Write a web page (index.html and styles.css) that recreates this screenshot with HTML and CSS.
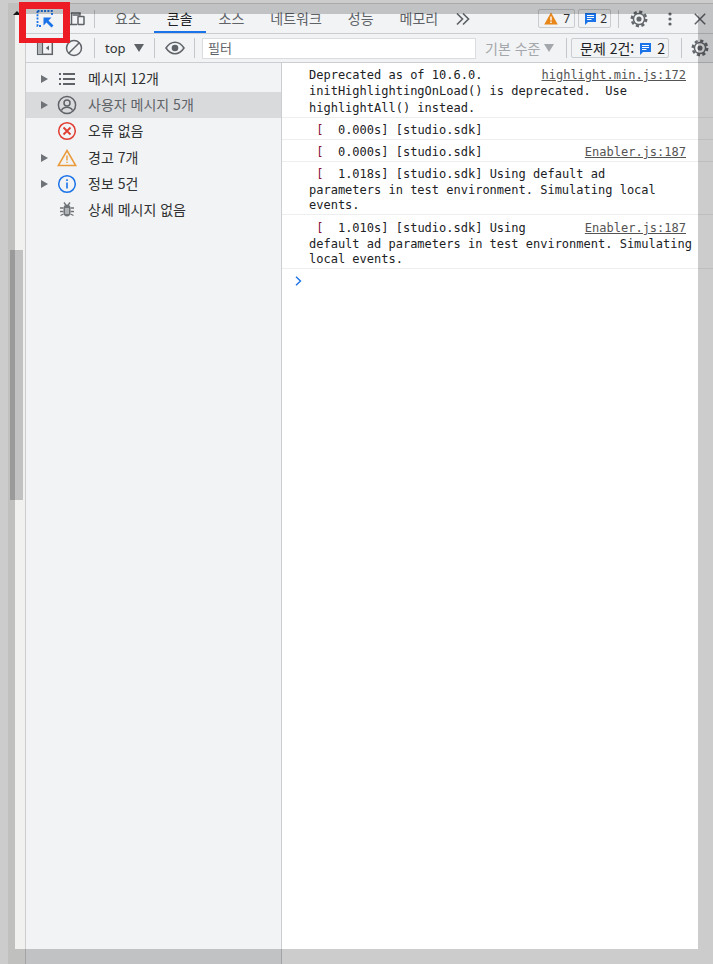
FILE: index.html
```html
<!DOCTYPE html>
<html lang="ko">
<head>
<meta charset="utf-8">
<title>DevTools Console</title>
<link rel="stylesheet" href="styles.css">
</head>
<body>
<svg class="defs" width="0" height="0"><defs><g id="gear-shape"><circle cx="10" cy="10" r="8" fill="none" stroke="#63676c" stroke-width="2.600" stroke-dasharray="3.500 2.780"/><circle cx="10" cy="10" r="7" fill="#63676c"/><circle cx="10" cy="10" r="5.300" fill="#f1f3f4"/><circle cx="10" cy="10" r="2.800" fill="#63676c"/></g></defs></svg>
<div class="page">
  <div class="scrollbar">
    <div class="scroll-arrow"></div>
    <div class="scroll-thumb"></div>
  </div>
  <div class="devtools">
    <div class="tabbar">
      <button class="icon-btn first">
        <svg width="18" height="18" viewBox="0 0 18 18"><path d="M1.500 1h14.500v4M1.500 1v15h4" fill="none" stroke="#1a73e8" stroke-width="1.800" stroke-dasharray="2 1.300"/><path d="M7.500 7.500h8l-3 3 5 5-2 2-5-5-3 3z" fill="#1a73e8"/></svg>
      </button>
      <button class="icon-btn second">
        <svg width="18" height="18" viewBox="0 0 18 18"><path d="M3 3h9v2H4.500" fill="none" stroke="#5f6368" stroke-width="1.500"/><path d="M3.500 3v11" stroke="#5f6368" stroke-width="1.500"/><rect x="10" y="6.500" width="6" height="8" rx=".6" fill="none" stroke="#5f6368" stroke-width="1.500"/><path d="M1.500 14.500H9" stroke="#5f6368" stroke-width="1.500"/></svg>
      </button>
      <span class="sep tab-sep"></span>
      <nav class="tabs">
        <span class="tab">요소</span>
        <span class="tab active">콘솔</span>
        <span class="tab">소스</span>
        <span class="tab">네트워크</span>
        <span class="tab">성능</span>
        <span class="tab">메모리</span>
      </nav>
      <svg class="more" width="16" height="14" viewBox="0 0 16 14"><path d="M2 1.500l5.500 5.500L2 12.500M8 1.500l5.500 5.500L8 12.500" fill="none" stroke="#5f6368" stroke-width="1.700"/></svg>
      <div class="tab-right">
        <span class="badge warn-badge">
          <svg width="14" height="13" viewBox="0 0 14 13"><path d="M7 .5l6.800 12H.2z" fill="#e8861a"/><path d="M6.300 4.500h1.400v4H6.300zM6.300 9.500h1.400v1.400H6.300z" fill="#fff"/></svg>7
        </span>
        <span class="badge info-badge">
          <svg width="13" height="13" viewBox="0 0 13 13"><path d="M1 1h11v9H4l-3 3z" fill="#1a73e8"/><path d="M3 3.500h7M3 5.500h7M3 7.500h4.500" stroke="#fff" stroke-width="1"/></svg>2
        </span>
        <span class="sep right-sep"></span>
        <svg class="gear top-gear" width="20" height="20" viewBox="-1 -1 22 22"><use href="#gear-shape"/></svg>
        <svg class="dots" width="4" height="14" viewBox="0 0 4 14"><circle cx="2" cy="2" r="1.600"/><circle cx="2" cy="7" r="1.600"/><circle cx="2" cy="12" r="1.600"/></svg>
        <svg class="close" width="12" height="12" viewBox="0 0 12 12"><path d="M.8.800l10.400 10.400M11.200.800L.8 11.200" stroke="#5f6368" stroke-width="1.500"/></svg>
      </div>
    </div>
    <div class="toolbar">
      <button class="icon-btn first">
        <svg width="18" height="18" viewBox="0 0 18 18"><rect x="1.700" y="2.700" width="14.600" height="12.600" fill="none" stroke="#5f6368" stroke-width="1.500"/><rect x="2" y="3" width="4.500" height="12" fill="#b5b8bb"/><path d="M6.500 3v12" stroke="#5f6368" stroke-width="1.200"/><path d="M13 6.500v5L9.800 9z" fill="#5f6368"/></svg>
      </button>
      <button class="icon-btn block">
        <svg width="18" height="18" viewBox="0 0 18 18"><circle cx="9" cy="9" r="7.500" fill="none" stroke="#5f6368" stroke-width="1.500"/><path d="M3.700 14.300L14.300 3.700" stroke="#5f6368" stroke-width="1.500"/></svg>
      </button>
      <span class="sep bar-sep-a"></span>
      <span class="context">top</span>
      <svg class="tri context-tri" width="10" height="8" viewBox="0 0 10 8"><path d="M0 0h10L5 8z" fill="#5f6368"/></svg>
      <span class="sep bar-sep-b"></span>
      <svg class="eye" width="20" height="14" viewBox="0 0 20 14"><path d="M1 7c2.500-3.800 5.500-5.700 9-5.700s6.500 1.900 9 5.700c-2.500 3.800-5.500 5.700-9 5.700S3.500 10.800 1 7z" fill="none" stroke="#5f6368" stroke-width="1.500"/><circle cx="10" cy="7" r="3.300" fill="#5f6368"/></svg>
      <span class="sep bar-sep-c"></span>
      <div class="filter">필터</div>
      <span class="levels">기본 수준</span>
      <svg class="tri" width="10" height="8" viewBox="0 0 10 8"><path d="M0 0h10L5 8z" fill="#a4a7ab"/></svg>
      <span class="sep bar-sep-d"></span>
      <span class="issues">문제 2건:
        <svg width="13" height="13" viewBox="0 0 13 13"><path d="M1 1h11v9H4l-3 3z" fill="#1a73e8"/><path d="M3 3.500h7M3 5.500h7M3 7.500h4.500" stroke="#fff" stroke-width="1"/></svg>2
      </span>
      <span class="sep bar-sep-e"></span>
      <svg class="gear bar-gear" width="20" height="20" viewBox="-1 -1 22 22"><use href="#gear-shape"/></svg>
    </div>
    <div class="panes">
      <aside class="sidebar">
        <div class="side-row">
          <span class="caret"></span>
          <svg class="side-icon" width="20" height="20" viewBox="0 0 20 20"><path d="M2 5h2M2 10h2M2 15h2M6 5h12M6 10h12M6 15h12" stroke="#5f6368" stroke-width="1.800"/></svg>
          <span class="label">메시지 12개</span>
        </div>
        <div class="side-row selected">
          <span class="caret"></span>
          <svg class="side-icon" width="20" height="20" viewBox="0 0 20 20"><circle cx="10" cy="10" r="8.600" fill="none" stroke="#5f6368" stroke-width="1.500"/><circle cx="10" cy="8" r="3" fill="none" stroke="#5f6368" stroke-width="1.500"/><path d="M4.500 15.500c1-2.500 3-3.300 5.500-3.300s4.500.8 5.500 3.300" fill="none" stroke="#5f6368" stroke-width="1.500"/></svg>
          <span class="label">사용자 메시지 5개</span>
        </div>
        <div class="side-row">
          <span class="caret hidden"></span>
          <svg class="side-icon" width="20" height="20" viewBox="0 0 20 20"><circle cx="10" cy="10" r="8.300" fill="none" stroke="#e03c31" stroke-width="1.500"/><path d="M6.500 6.500l7 7M13.500 6.500l-7 7" stroke="#e03c31" stroke-width="1.800"/></svg>
          <span class="label">오류 없음</span>
        </div>
        <div class="side-row">
          <span class="caret"></span>
          <svg class="side-icon" width="20" height="20" viewBox="0 0 20 20"><path d="M10 2.500L18.700 17.500H1.300z" fill="none" stroke="#ea9a3a" stroke-width="1.500"/><path d="M9.300 7.500h1.400v5H9.300zM9.300 13.700h1.400v1.400H9.300z" fill="#ea9a3a"/></svg>
          <span class="label">경고 7개</span>
        </div>
        <div class="side-row">
          <span class="caret"></span>
          <svg class="side-icon" width="20" height="20" viewBox="0 0 20 20"><circle cx="10" cy="10" r="8.300" fill="none" stroke="#1a73e8" stroke-width="1.500"/><path d="M9.200 8.500h1.600v6H9.200zM9.200 5.300h1.600v1.700H9.200z" fill="#1a73e8"/></svg>
          <span class="label">정보 5건</span>
        </div>
        <div class="side-row">
          <span class="caret hidden"></span>
          <svg class="side-icon" width="20" height="20" viewBox="0 0 20 20"><path d="M6.500 8c0-2 1.500-3.500 3.500-3.500S13.500 6 13.500 8v5c0 2-1.500 3.500-3.500 3.500S6.500 15 6.500 13z" fill="#6f7276"/><path d="M7 2.500l1.800 2.500M13 2.500L11.200 5M3 8h3.500M17 8h-3.500M3 11.500h3.500M17 11.500h-3.500M3.500 15.500l3-1.500M16.500 15.500l-3-1.500" stroke="#6f7276" stroke-width="1.300"/><path d="M8 9h4M8 11h4M8 13h4" stroke="#f1f3f4" stroke-width="1"/></svg>
          <span class="label">상세 메시지 없음</span>
        </div>
      </aside>
      <main class="console">
        <div class="msg msg-top"><a class="src">highlight.min.js:172</a>Deprecated as of 10.6.0.
initHighlightingOnLoad() is deprecated.  Use
highlightAll() instead.</div>
        <div class="msg msg-one"> <span class="br">[</span>  0.000s] [studio.sdk]</div>
        <div class="msg msg-one"><a class="src">Enabler.js:187</a> <span class="br">[</span>  0.000s] [studio.sdk]</div>
        <div class="msg"> <span class="br">[</span>  1.018s] [studio.sdk] Using default ad
parameters in test environment. Simulating local events.</div>
        <div class="msg msg-last"><a class="src">Enabler.js:187</a> <span class="br">[</span>  1.010s] [studio.sdk] Using default ad parameters in test environment. Simulating local events.</div>
        <div class="prompt"><svg width="7" height="10" viewBox="0 0 7 10"><path d="M1 .8L5.500 5 1 9.200" fill="none" stroke="#1a73e8" stroke-width="1.400"/></svg></div>
      </main>
    </div>
  </div>
</div>
<div class="shade shade-top"></div>
<div class="shade shade-left"></div>
<div class="shade shade-right"></div>
<div class="shade shade-bottom"></div>
<div class="highlight-box"></div>
</body>
</html>
```

FILE: styles.css
```css
* { box-sizing: border-box; }
html, body { margin: 0; padding: 0; background: #fff; overflow: hidden; }
body {
  width: 713px;
  height: 964px;
  font-family: "Noto Sans CJK KR", "Noto Sans", sans-serif;
  font-size: 14px;
  color: #303133;
}
.defs { position: absolute; }
.page { display: flex; height: 964px; padding: 3px 0 0 8px; }
.scrollbar {
  width: 18px;
  flex: none;
  background: #f1f1ef;
  border-right: 1px solid #cbcdd0;
  padding: 8px 0 0 2px;
}
.scroll-arrow {
  width: 0;
  height: 0;
  margin-left: 3px;
  border: 4px solid transparent;
  border-top: 0;
  border-bottom: 4px solid #1c1c1c;
}
.scroll-thumb { width: 13px; height: 250px; margin-top: 235px; background: #c1c1c1; }
.devtools { flex: 1; display: flex; flex-direction: column; min-width: 0; }
.tabbar {
  height: 31px;
  flex: none;
  display: flex;
  align-items: center;
  background: #f1f3f4;
  border-top: 1px solid #d4d4d4;
  border-bottom: 1px solid #cbcdd0;
}
.icon-btn {
  border: 0;
  background: none;
  padding: 0;
  width: 18px;
  height: 18px;
  display: block;
  flex: none;
}
.icon-btn svg { display: block; }
.icon-btn.first { margin-left: 10px; }
.icon-btn.second { margin-left: 14px; }
.icon-btn.block { margin-left: 11px; }
.sep { width: 1px; height: 20px; background: #c4c7cb; flex: none; }
.tab-sep { margin: 0 7px 0 8px; height: 18px; }
.tabs { display: flex; height: 100%; }
.tab {
  padding: 0 13px;
  display: flex;
  align-items: center;
  color: #5f6368;
  font-size: 14px;
  height: 29px;
  border-bottom: 2px solid transparent;
}
.tab.active { color: #202124; border-bottom-color: #1a73e8; }
.more { margin-left: 4px; flex: none; }
.tab-right { display: flex; align-items: center; margin-left: 67px; }
.badge {
  height: 19px;
  border: 1px solid #c9ccd0;
  border-radius: 2px;
  display: flex;
  align-items: center;
  gap: 5px;
  padding: 0 3px 0 5px;
  font-family: "Noto Sans", sans-serif;
  font-size: 12px;
  color: #303133;
}
.warn-badge { width: 37px; }
.info-badge { width: 33px; margin-left: 3px; padding-left: 5px; gap: 3px; }
.right-sep { margin: 0 10px 0 7px; height: 18px; }
.gear { display: block; flex: none; }
.dots { fill: #5f6368; margin-left: 19px; flex: none; }
.close { margin-left: 22px; flex: none; }
.toolbar {
  height: 29px;
  flex: none;
  display: flex;
  align-items: center;
  background: #f1f3f4;
  border-bottom: 1px solid #cbcdd0;
}
.bar-sep-a { margin-left: 11px; }
.context { margin-left: 10px; width: 20px; font-family: "Noto Sans", sans-serif; font-size: 13px; color: #303133; }
.context-tri { margin-left: 9px; }
.tri { flex: none; }
.bar-sep-b { margin-left: 10px; }
.eye { margin-left: 10px; flex: none; }
.bar-sep-c { margin-left: 9px; }
.filter {
  margin-left: 7px;
  width: 274px;
  height: 21px;
  flex: none;
  background: #fff;
  border: 1px solid #dadce0;
  padding-left: 5px;
  font-size: 13px;
  line-height: 18px;
  color: #5f6368;
}
.levels { margin-left: 9px; width: 59px; flex: none; color: #a4a7ab; white-space: nowrap; }
.bar-sep-d { margin-left: 12px; }
.issues {
  margin-left: 4px;
  width: 98px;
  height: 20px;
  flex: none;
  border: 1px solid #c9ccd0;
  border-radius: 2px;
  display: flex;
  align-items: center;
  padding-left: 8px;
  gap: 5px;
  white-space: nowrap;
  color: #202124;
}
.bar-sep-e { margin-left: 12px; }
.bar-gear { margin-left: 8px; }
.panes { flex: 1; display: flex; min-height: 0; }
.sidebar {
  width: 256px;
  flex: none;
  background: #f1f3f4;
  border-right: 1px solid #cbcdd0;
  padding-top: 3px;
}
.side-row { height: 26.2px; display: flex; align-items: center; }
.side-row.selected { background: #d9dadc; }
.side-row.selected .label { color: #5f6368; }
.caret {
  width: 0;
  height: 0;
  margin-left: 15px;
  border-left: 7px solid #6f7276;
  border-top: 4px solid transparent;
  border-bottom: 4px solid transparent;
  flex: none;
}
.caret.hidden { visibility: hidden; }
.side-icon { margin-left: 9px; flex: none; }
.label { margin-left: 11px; padding-bottom: 2px; white-space: nowrap; color: #303133; }
.console {
  flex: 1;
  min-width: 0;
  background: #fff;
  font-family: "DejaVu Sans Mono", monospace;
  font-size: 12px;
  line-height: 15.7px;
  color: #202124;
}
.msg {
  white-space: pre-wrap;
  padding: 5px 18px 0 27px;
  border-bottom: 1px solid #eceef0;
}
.msg-top { line-height: 16.33px; padding-top: 4px; padding-bottom: 1px; }
.msg-one { line-height: 16px; padding-top: 4px; padding-bottom: 1px; }
.msg-last { line-height: 15.5px; padding-top: 6px; }
.src {
  float: right;
  margin: 0 9px 0 4px;
  color: #545454;
  text-decoration: underline;
}
.br { color: #84123a; }
.prompt { padding: 7px 0 0 13px; }
.prompt svg { display: block; }
.shade { position: absolute; background: rgba(0, 0, 0, .2); }
.shade-top { left: 0; top: 0; width: 713px; height: 14px; }
.shade-left { left: 0; top: 14px; width: 15px; height: 935px; }
.shade-right { left: 698px; top: 14px; width: 15px; height: 935px; }
.shade-bottom { left: 0; top: 949px; width: 713px; height: 15px; }
.highlight-box {
  position: absolute;
  left: 19px;
  top: 2px;
  width: 51px;
  height: 41px;
  border: solid #ed1c24;
  border-width: 7px 7px 5px 7px;
}
```
